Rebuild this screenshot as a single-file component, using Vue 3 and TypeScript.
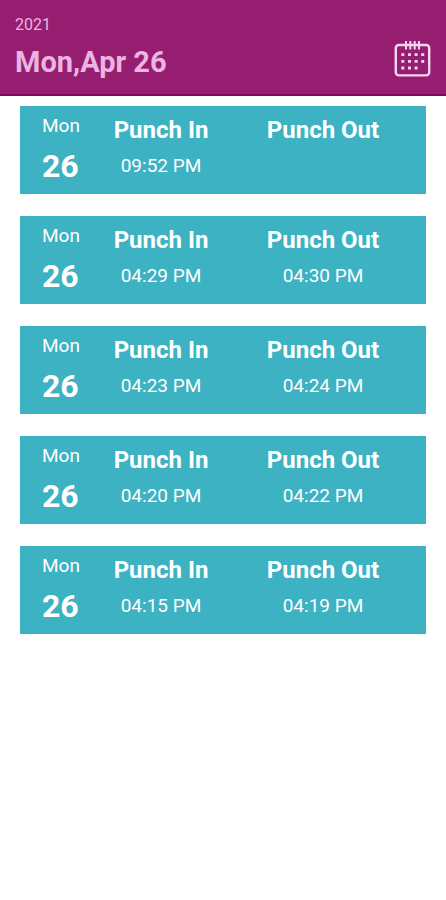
<script setup lang="ts">
interface Punch {
  id: number
  weekday: string
  day: string
  punchIn: string
  punchOut: string
}

const year = '2021'
const selectedDate = 'Mon,Apr 26'

const punches: Punch[] = [
  { id: 5, weekday: 'Mon', day: '26', punchIn: '09:52 PM', punchOut: '' },
  { id: 4, weekday: 'Mon', day: '26', punchIn: '04:29 PM', punchOut: '04:30 PM' },
  { id: 3, weekday: 'Mon', day: '26', punchIn: '04:23 PM', punchOut: '04:24 PM' },
  { id: 2, weekday: 'Mon', day: '26', punchIn: '04:20 PM', punchOut: '04:22 PM' },
  { id: 1, weekday: 'Mon', day: '26', punchIn: '04:15 PM', punchOut: '04:19 PM' },
]
</script>

<template>
  <div class="screen">
    <header class="header">
      <div>
        <p class="year">{{ year }}</p>
        <h1 class="date">{{ selectedDate }}</h1>
      </div>
      <button class="calendar" type="button" aria-label="Choose date">
        <svg viewBox="0 0 38 38" width="38" height="38" fill="none" stroke="currentColor" aria-hidden="true">
          <rect x="2.800" y="4" width="33.400" height="30.400" rx="3" stroke-width="2.400" />
          <path d="M13 0v8.500M17.300 0v8.500M21.700 0v8.500M26 0v8.500" stroke-width="2" />
          <path
            d="M8.300 13.700h3M15 13.700h3M21.600 13.700h3M28.200 13.700h3M8.300 20.300h3M15 20.300h3M21.600 20.300h3M28.200 20.300h3M8.300 27h3M15 27h3M21.600 27h3"
            stroke-width="2.800"
          />
        </svg>
      </button>
    </header>

    <main>
      <ul class="list">
        <li v-for="punch in punches" :key="punch.id" class="card">
          <div class="cell day-cell">
            <span class="text">{{ punch.weekday }}</span>
            <strong class="day">{{ punch.day }}</strong>
          </div>
          <div class="cell">
            <h2 class="label">Punch In</h2>
            <span class="text time">{{ punch.punchIn }}</span>
          </div>
          <div class="cell">
            <h2 class="label">Punch Out</h2>
            <span class="text time">{{ punch.punchOut }}</span>
          </div>
        </li>
      </ul>
    </main>
  </div>
</template>

<style>
body {
  margin: 0;
  background: #fff;
}
</style>

<style scoped>
.screen {
  font-family: Roboto, "Liberation Sans", sans-serif;
}

.header {
  display: flex;
  justify-content: space-between;
  align-items: flex-end;
  box-sizing: border-box;
  padding: 15px;
  background: #961e70;
  border-bottom: 2px solid #86045c;
  color: #ecb4e0;
}

.year {
  margin: 0;
  font-size: 16px;
  line-height: 20px;
}

.date {
  margin: 10px 0 0;
  font-size: 29px;
  line-height: 34px;
  font-weight: 700;
}

.calendar {
  display: block;
  padding: 0;
  border: 0;
  background: none;
  color: #f8d4f0;
  cursor: pointer;
}

.calendar svg {
  display: block;
  overflow: visible;
}

.list {
  display: flex;
  flex-direction: column;
  gap: 22px;
  margin: 0;
  padding: 10px 20px 22px;
  list-style: none;
}

.card {
  display: grid;
  grid-template-columns: 38px 1fr 1fr;
  box-sizing: border-box;
  min-height: 88px;
  padding: 8px 22px;
  background: #3db2c2;
  color: #fff;
}

.cell {
  display: flex;
  flex-direction: column;
  align-items: center;
}

.day-cell {
  align-items: flex-start;
}

.text {
  font-size: 19px;
  line-height: 24px;
}

.day {
  margin-top: 8px;
  font-size: 32px;
  line-height: 40px;
}

.label {
  margin: 0;
  font-size: 24px;
  line-height: 32px;
  font-weight: 700;
  white-space: nowrap;
}

.time {
  margin-top: 8px;
}
</style>
